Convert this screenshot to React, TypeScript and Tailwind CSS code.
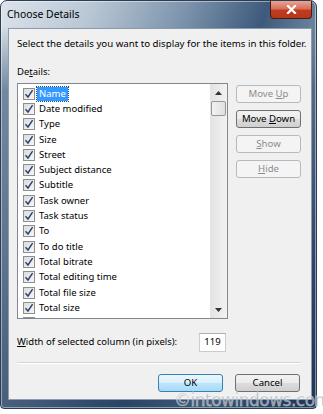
import React from 'react';

const items = [
  'Name',
  'Date modified',
  'Type',
  'Size',
  'Street',
  'Subject distance',
  'Subtitle',
  'Task owner',
  'Task status',
  'To',
  'To do title',
  'Total bitrate',
  'Total editing time',
  'Total file size',
  'Total size',
  'Track number',
];

const font = { fontFamily: '"Noto Sans", "Open Sans", sans-serif' };

function CheckBox() {
  return (
    <span className="w-[12px] h-[12px] shrink-0 border border-[#8e8f8f] bg-[linear-gradient(135deg,#dcdcdc,#f6f6f6)] flex items-center justify-center">
      <svg width="10" height="10" viewBox="0 0 10 10">
        <path d="M1.5 5.2 L4 8 L8.6 1.2" fill="none" stroke="#2c3f72" strokeWidth="1.4" />
      </svg>
    </span>
  );
}

function WinButton({ children, disabled, primary }: { children: React.ReactNode; disabled?: boolean; primary?: boolean }) {
  let cls = 'border-[#707070] bg-[linear-gradient(#f2f2f2_0%,#ebebeb_50%,#dddddd_51%,#cfcfcf_100%)] text-black';
  if (disabled) cls = 'border-[#b6babe] bg-[#f4f4f4] text-[#8d8d8d]';
  if (primary) cls = 'border-[#3c7fb1] bg-[linear-gradient(#eaf6fd_0%,#d9f0fc_50%,#bee6fd_51%,#a7d9f5_100%)] text-black';
  return (
    <div className={`w-[65px] h-[18px] rounded-[3px] border flex items-center justify-center text-[9.6px] leading-none ${cls}`}>
      <span>{children}</span>
    </div>
  );
}

export default function App() {
  return (
    <div className="w-[323px] h-[414px] bg-white relative" style={font}>
      <div className="w-[317px] h-[409px] rounded-t-[7px] rounded-b-[4px] border border-[#2b3d52] bg-[linear-gradient(180deg,rgba(40,70,105,0)_0%,rgba(40,70,105,0)_6%,rgba(40,70,105,0.55)_22%,rgba(30,55,90,0.65)_100%),linear-gradient(110deg,#dbe3ea_0%,#b9c7d5_20%,#7e95ad_40%,#3d5a7c_58%,#7f97ae_75%,#3a5577_88%,#1f3552_100%)] flex flex-col shadow-[inset_0_0_0_1px_rgba(255,255,255,0.45)]">
        {/* title bar */}
        <div className="h-[27px] flex items-start justify-between pl-[6px] pr-[4px]">
          <span className="text-[10.4px] text-black mt-[6px]">Choose Details</span>
          <div className="w-[42px] h-[18px] rounded-b-[4px] border border-t-0 border-[#4b1a10] bg-[linear-gradient(#e9a594_0%,#d7705a_45%,#c13b1f_55%,#b6371a_100%)] flex items-center justify-center">
            <svg width="11" height="9" viewBox="0 0 11 9">
              <path d="M2 1 L9 8 M9 1 L2 8" stroke="white" strokeWidth="2.2" strokeLinecap="square" />
            </svg>
          </div>
        </div>

        {/* client area */}
        <div className="ml-[7px] mr-[4px] h-[372px] bg-[#f0f0f0] border border-[#8d9cad] flex flex-col pl-[8px] pr-[10px] text-[9.5px] text-black">
          <div className="mt-[7px] leading-[15px] whitespace-nowrap text-[9.7px]">
            Select the details you want to display for the items in this folder.
          </div>
          <div className="mt-[13px] leading-[15px]">
            De<span className="underline">t</span>ails:
          </div>

          <div className="mt-[4px] flex gap-[8px]">
            <div className="w-[211px] h-[236px] border border-[#828790] bg-white flex overflow-hidden">
              <div className="flex-1 pt-[2px] pl-[5px] overflow-hidden">
                {items.map((name, i) => (
                  <div key={name} className="h-[15.3px] flex items-center gap-[2px]">
                    <CheckBox />
                    <span
                      className={
                        i === 0
                          ? 'bg-[#3399ff] text-white px-[2px] leading-[14px] outline-1 outline-dotted outline-[#1b4f8a]'
                          : 'px-[2px] leading-[14px]'
                      }
                    >
                      {name}
                    </span>
                  </div>
                ))}
              </div>
              <div className="w-[17px] h-full bg-[linear-gradient(90deg,#e3e3e3,#f2f2f2)] flex flex-col">
                <div className="h-[17px] flex items-center justify-center">
                  <svg width="7" height="4" viewBox="0 0 7 4">
                    <path d="M0 4 L3.5 0 L7 4 Z" fill="#333" />
                  </svg>
                </div>
                <div className="mx-[1px] h-[15px] rounded-[2px] border border-[#979797] bg-[linear-gradient(90deg,#f2f2f2,#e0e0e0)]" />
                <div className="flex-1" />
                <div className="h-[17px] flex items-center justify-center">
                  <svg width="7" height="4" viewBox="0 0 7 4">
                    <path d="M0 0 L3.5 4 L7 0 Z" fill="#333" />
                  </svg>
                </div>
              </div>
            </div>

            <div className="flex flex-col gap-[7px] pt-[2px]">
              <WinButton disabled>
                Move <span className="underline">U</span>p
              </WinButton>
              <WinButton>
                Move <span className="underline">D</span>own
              </WinButton>
              <WinButton disabled>
                <span className="underline">S</span>how
              </WinButton>
              <WinButton disabled>
                <span className="underline">H</span>ide
              </WinButton>
            </div>
          </div>

          <div className="mt-[14px] flex items-center">
            <span className="w-[182px] whitespace-nowrap">
              <span className="underline">W</span>idth of selected column (in pixels):
            </span>
            <div className="w-[27px] h-[19px] border border-[#c9cdd2] border-t-[#abadb3] bg-white flex items-center justify-center">
              119
            </div>
          </div>

          <div className="mt-[10px] h-[2px] border-t border-[#d5d5d5] border-b border-b-white w-[284px]" />

          <div className="mt-[10px] flex justify-end gap-[12px] pr-[1px]">
            <WinButton primary>OK</WinButton>
            <WinButton>Cancel</WinButton>
          </div>
        </div>
      </div>

      <div
        className="absolute left-[174px] top-[388px] text-[17px] tracking-[-0.5px] text-[#a5adb4] opacity-80"
        style={{ fontFamily: '"DejaVu Sans", sans-serif', WebkitTextStroke: '0.3px #ffffff' }}
      >
        ©intowindows.com
      </div>
    </div>
  );
}
